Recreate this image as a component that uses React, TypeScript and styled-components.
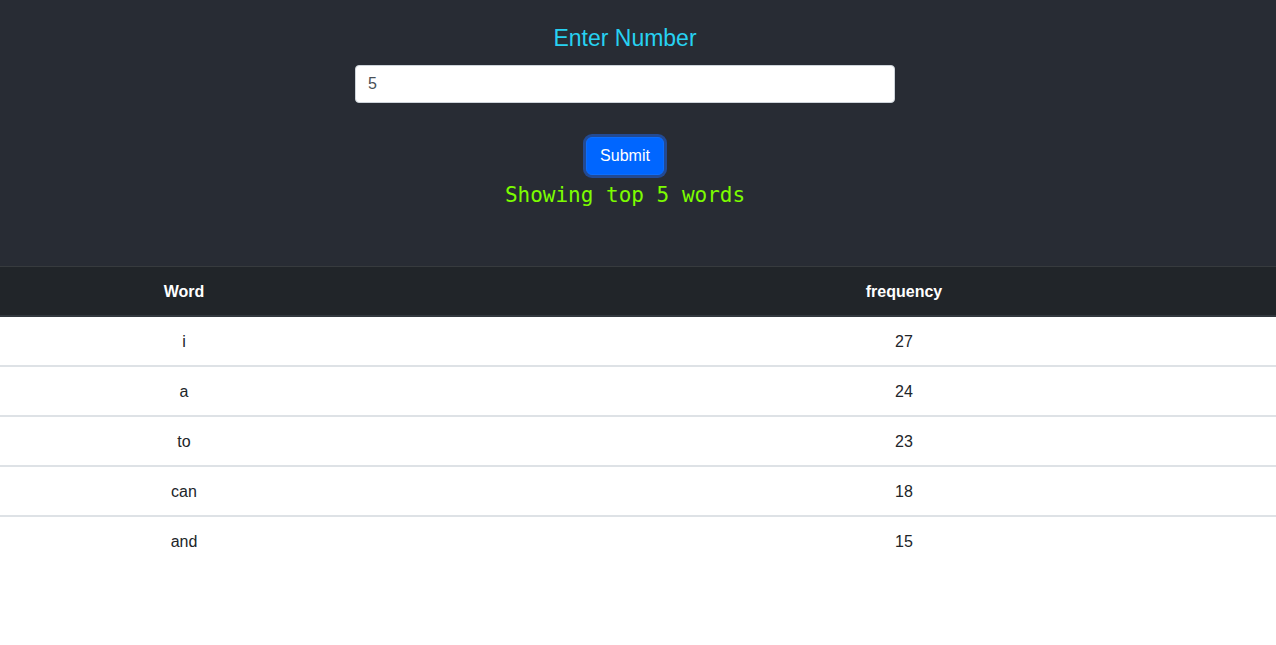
import React from "react";
import styled, { createGlobalStyle } from "styled-components";

const Global = createGlobalStyle`
  html, body { margin: 0; padding: 0; background: #fff; }
  body { font-family: "Liberation Sans", Arial, sans-serif; color: #212529; }
`;

const Header = styled.header`
  background: #282c34;
  height: 266px;
  display: flex;
  flex-direction: column;
  align-items: center;
  padding-right: 26px;
  box-sizing: border-box;
`;

const Title = styled.h2`
  margin: 24px 0 0;
  font-size: 23px;
  font-weight: 400;
  line-height: 28px;
  color: #27d1f1;
`;

const Input = styled.input`
  margin-top: 13px;
  width: 540px;
  height: 38px;
  box-sizing: border-box;
  border: 1px solid #ced4da;
  border-radius: 4px;
  padding: 6px 12px;
  font-family: "Liberation Sans", Arial, sans-serif;
  font-size: 16px;
  color: #495057;
  background: #fff;
  outline: none;
`;

const Button = styled.button`
  margin-top: 34px;
  height: 38px;
  padding: 0 13px;
  box-sizing: border-box;
  border: 1px solid #0d6efd;
  border-radius: 6px;
  background: #0066ff;
  color: #fff;
  font-family: "Liberation Sans", Arial, sans-serif;
  font-size: 16px;
  box-shadow: 0 0 0 3px rgba(30, 90, 200, 0.65);
`;

const Status = styled.p`
  margin: 7px 0 0;
  font-family: "DejaVu Sans Mono", monospace;
  font-size: 21px;
  line-height: 26px;
  color: #7cfc00;
`;

const Table = styled.div`
  border-top: 1px solid #373b3e;
`;

const Row = styled.div<{ $head?: boolean }>`
  display: grid;
  grid-template-columns: 368px 1fr;
  height: 50px;
  padding-top: 2px;
  box-sizing: border-box;
  align-items: center;
  background: ${(p) => (p.$head ? "#212529" : "#fff")};
  color: ${(p) => (p.$head ? "#fff" : "#212529")};
  font-weight: ${(p) => (p.$head ? 700 : 400)};
  border-bottom: ${(p) => (p.$head ? "2px solid #32383e" : "2px solid #dee2e6")};
  &:last-child { border-bottom-color: transparent; }
`;

const Cell = styled.div<{ $shift?: boolean }>`
  text-align: center;
  font-size: 16px;
  padding-left: ${(p) => (p.$shift ? "164px" : "0")};
`;

const data: [string, number][] = [
  ["i", 27],
  ["a", 24],
  ["to", 23],
  ["can", 18],
  ["and", 15],
];

export default function App() {
  return (
    <>
      <Global />
      <Header>
        <Title>Enter Number</Title>
        <Input defaultValue="5" />
        <Button>Submit</Button>
        <Status>Showing top 5 words</Status>
      </Header>
      <Table>
        <Row $head>
          <Cell>Word</Cell>
          <Cell $shift>frequency</Cell>
        </Row>
        {data.map(([w, f]) => (
          <Row key={w}>
            <Cell>{w}</Cell>
            <Cell $shift>{f}</Cell>
          </Row>
        ))}
      </Table>
    </>
  );
}
